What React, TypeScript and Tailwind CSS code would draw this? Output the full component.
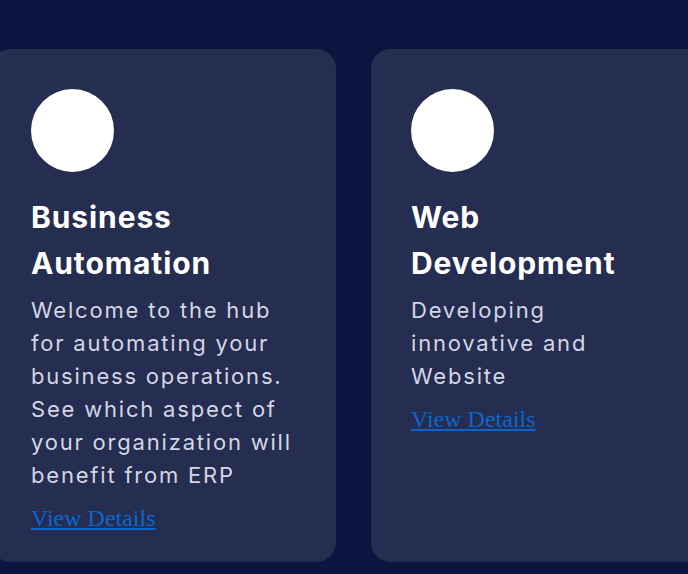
import React from "react";

type Card = { title: string; body: string };

const cards: Card[] = [
  {
    title: "Business Automation",
    body: "Welcome to the hub for automating your business operations. See which aspect of your organization will benefit from ERP",
  },
  {
    title: "Web Development",
    body: "Developing innovative and Website",
  },
];

export default function App() {
  return (
    <div className="w-[688px] h-[574px] overflow-hidden bg-[#0a1640]" style={{ fontFamily: "Inter, 'Noto Sans', sans-serif" }}>
      <div className="flex gap-[35px] pt-[49px] -ml-[9px]">
        {cards.map((c) => (
          <div key={c.title} className="shrink-0 w-[345px] h-[513px] rounded-[20px] bg-[#252d50] pt-[40px] px-[40px]">
            <div className="w-[83px] h-[83px] rounded-full bg-white" />
            <h3 className="mt-[22px] text-[30px] leading-[46px] font-bold text-white tracking-[0.9px]">{c.title}</h3>
            <p className="mt-[8px] text-[22px] leading-[33px] text-[#d4d6e6] tracking-[1.8px]">{c.body}</p>
            <a href="#" className="block mt-[12px] text-[24px] leading-[28px] text-[#0b66cc] underline" style={{ fontFamily: "'Liberation Serif', serif" }}>
              View Details
            </a>
          </div>
        ))}
      </div>
    </div>
  );
}
